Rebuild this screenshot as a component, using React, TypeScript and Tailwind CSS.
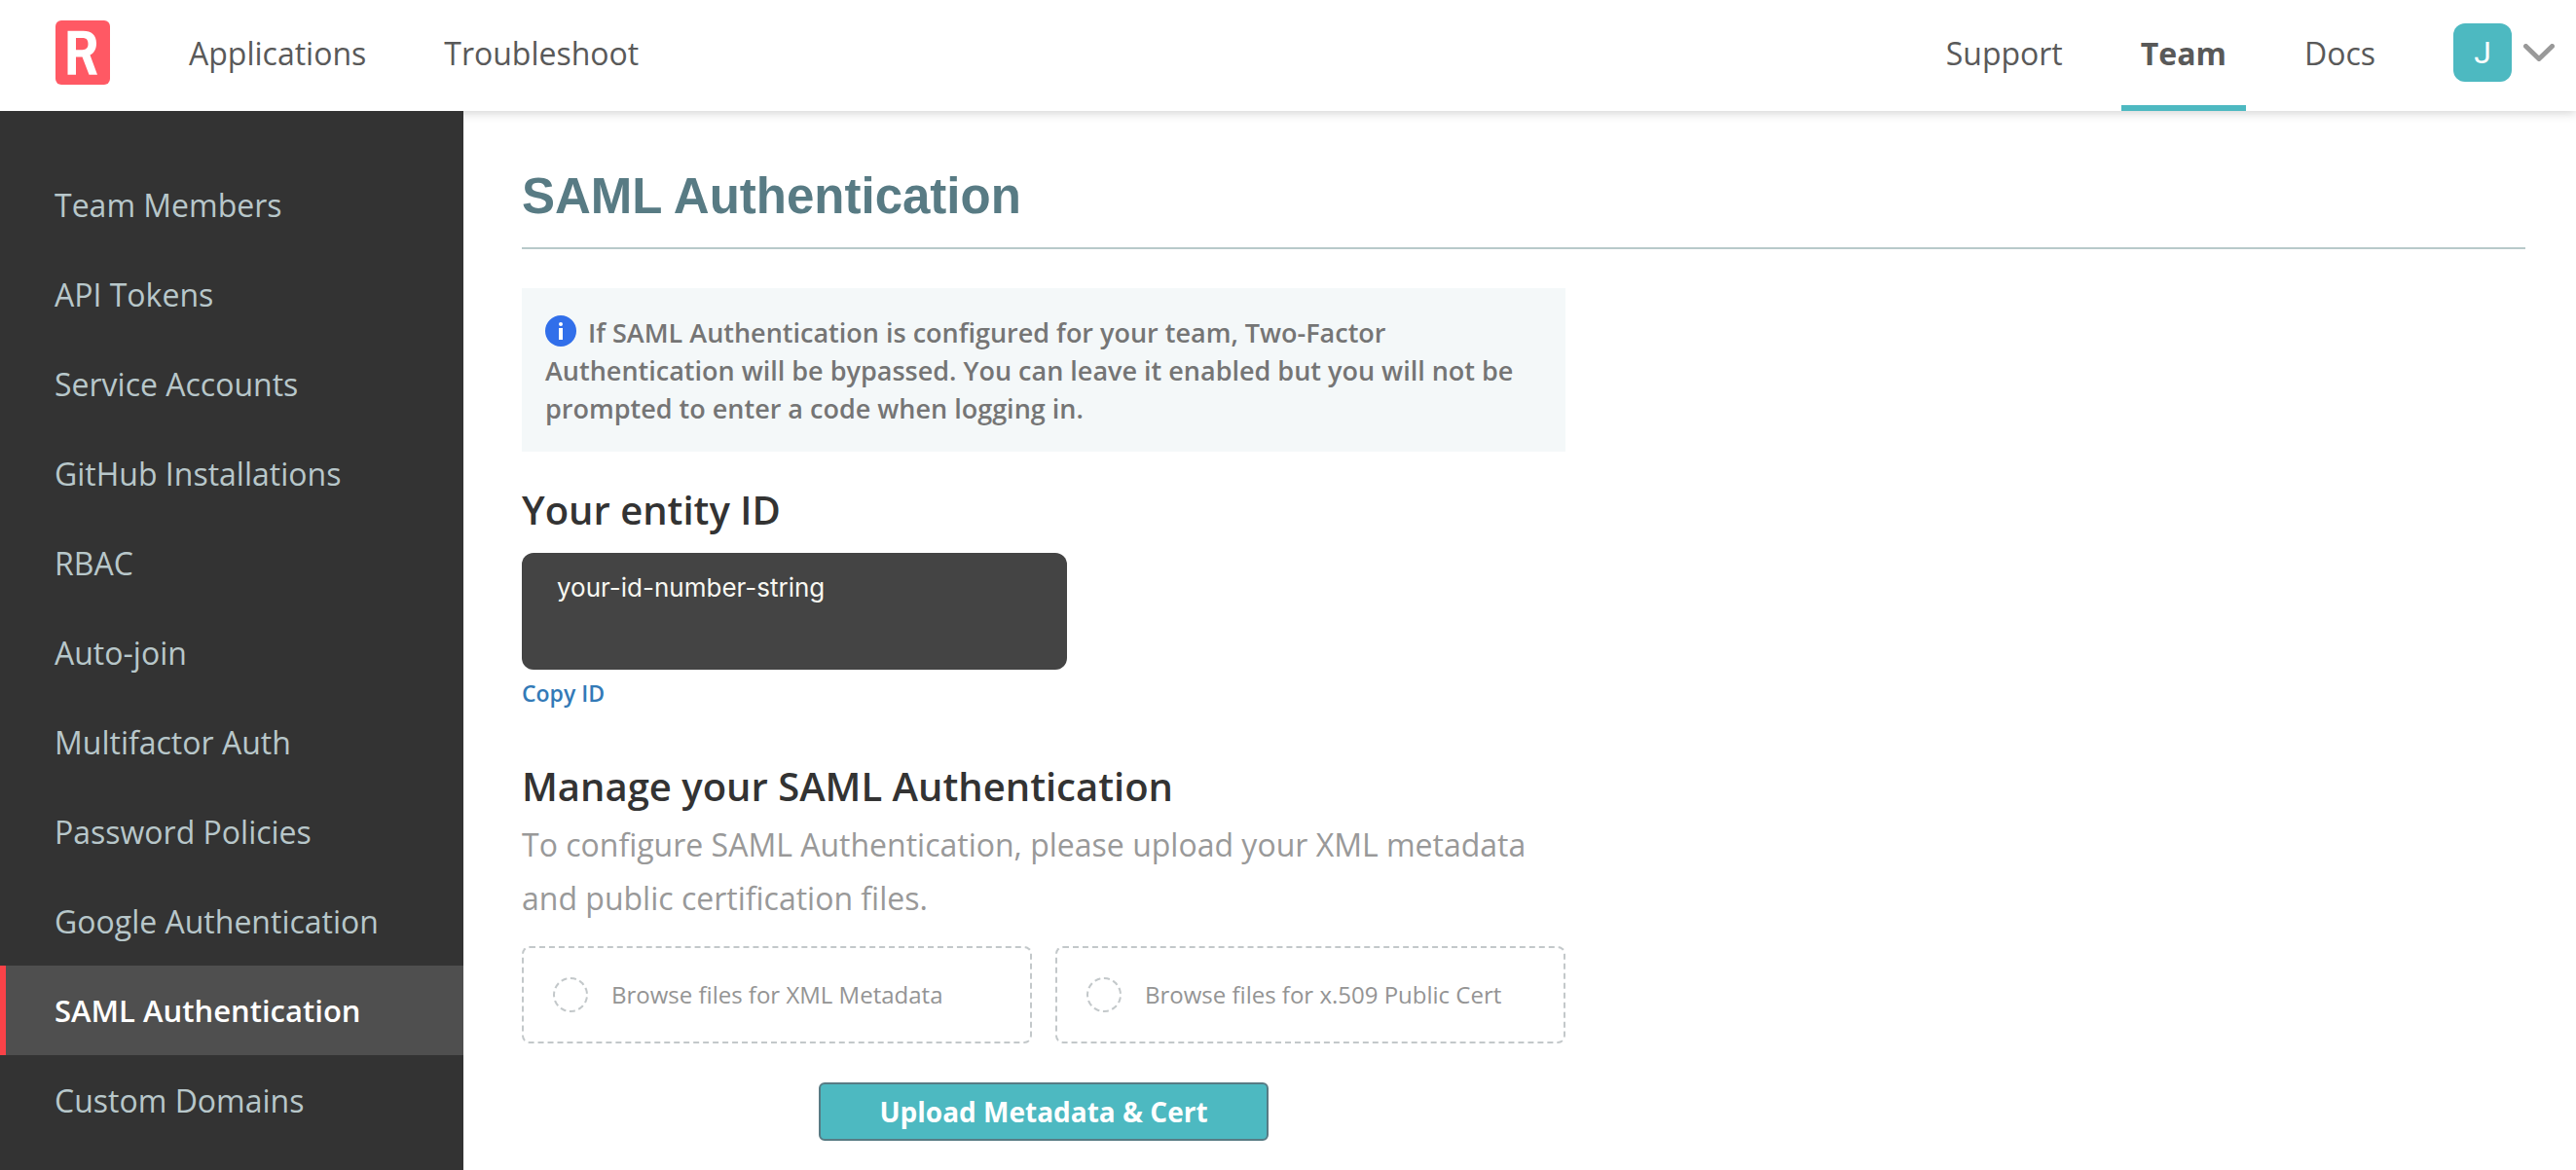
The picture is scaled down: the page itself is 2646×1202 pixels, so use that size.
import React from 'react';

const sideLinks = [
  'Team Members',
  'API Tokens',
  'Service Accounts',
  'GitHub Installations',
  'RBAC',
  'Auto-join',
  'Multifactor Auth',
  'Password Policies',
  'Google Authentication',
  'SAML Authentication',
  'Custom Domains',
];

const activeLink = 'SAML Authentication';

function Logo() {
  return (
    <svg viewBox="0 0 56 66" className="h-[66px] w-14" aria-label="Home" role="img">
      <rect width="56" height="66" rx="6" fill="#ff5964" />
      <path
        fillRule="evenodd"
        fill="#fff"
        d="M12.5 10.7h16c8.5 0 13.5 4.5 13.5 12.8 0 6-2.5 10-6.5 12l7.5 20.3h-8.500l-7-18.300h-6.500v18.300h-8.500zM21 18v12.300h6.500c4 0 6-2.200 6-6.200s-1.500-6.100-6-6.100z"
      />
    </svg>
  );
}

function InfoIcon() {
  return (
    <svg viewBox="0 0 32 32" className="mr-3 inline-block size-8 align-[-4px]" aria-hidden="true">
      <circle cx="16" cy="16" r="16" fill="#316fea" />
      <circle cx="16" cy="9" r="2" fill="#fff" />
      <rect x="14" y="13" width="4" height="12" fill="#fff" />
    </svg>
  );
}

function FilePicker({ id, label }: { id: string; label: string }) {
  return (
    <label
      htmlFor={id}
      className="flex h-[100px] flex-1 cursor-pointer items-center gap-6 rounded-lg border-2 border-dashed border-[#c3c8ca] px-[30px] text-2xl text-[#949494]"
    >
      <input id={id} type="file" className="sr-only" />
      <span className="size-9 rounded-full border-2 border-dashed border-[#c3c8ca]" />
      {label}
    </label>
  );
}

export default function App() {
  return (
    <div className="flex min-h-screen flex-col bg-white font-['Open_Sans',sans-serif] text-[#333]">
      <header className="relative flex h-[114px] items-center bg-white pr-[22px] pl-[57px] text-[32px] text-[#595959] shadow-[0_2px_10px_rgba(0,0,0,0.18)]">
        <a href="#" className="mr-[81px] pb-1.5">
          <Logo />
        </a>
        <nav className="flex gap-20 pb-1">
          <a href="#">Applications</a>
          <a href="#">Troubleshoot</a>
        </nav>
        <nav className="ml-auto flex h-full gap-10">
          <a href="#" className="flex items-center border-b-6 border-transparent px-5 pt-0.5">
            Support
          </a>
          <a
            href="#"
            className="flex items-center border-b-6 border-[#4db9c1] px-5 pt-0.5 font-bold"
          >
            Team
          </a>
          <a href="#" className="flex items-center border-b-6 border-transparent px-5 pt-0.5">
            Docs
          </a>
        </nav>
        <button
          type="button"
          aria-label="Account menu"
          className="ml-[60px] flex items-center gap-3 pb-1.5"
        >
          <span className="flex size-[60px] items-center justify-center rounded-xl bg-[#4db9c1] font-['Roboto',sans-serif] text-[32px] text-white">
            J
          </span>
          <svg viewBox="0 0 32 18" className="h-[18px] w-8" aria-hidden="true">
            <path
              d="M2.5 2.5L16 15.5l13.5-13"
              fill="none"
              stroke="#999"
              strokeWidth="5"
              strokeLinecap="round"
              strokeLinejoin="round"
            />
          </svg>
        </button>
      </header>

      <div className="flex flex-1">
        <nav className="relative w-[476px] shrink-0 bg-[#333] pt-[50px] text-[32px] text-[#b8c7ca]">
          {sideLinks.map((label) => (
            <a
              key={label}
              href="#"
              aria-current={label === activeLink ? 'page' : undefined}
              className={
                label === activeLink
                  ? 'flex h-[92px] items-center border-l-6 border-[#fa4248] bg-[#4f4f4f] pl-[50px] text-[31px] font-semibold text-white'
                  : 'flex h-[92px] items-center border-l-6 border-transparent pt-0.5 pl-[50px]'
              }
            >
              {label}
            </a>
          ))}
        </nav>

        <main className="min-w-0 flex-1 pr-[52px] pl-[60px]">
          <h1 className="border-b-2 border-[#b8c9ca] pt-14 pb-5 font-['Liberation_Sans',sans-serif] text-[51px] leading-[64px] font-bold text-[#587b84]">
            SAML Authentication
          </h1>

          <div className="max-w-[1072px]">
            <p className="mt-10 bg-[#f4f8f9] px-6 pt-[26px] pb-[25px] text-[27px] leading-[39px] font-semibold text-[#757575]">
              <InfoIcon />
              If SAML Authentication is configured for your team, Two-Factor Authentication will be
              bypassed. You can leave it enabled but you will not be prompted to enter a code when
              logging in.
            </p>

            <h2 className="mt-8 text-[40px] leading-[56px] font-semibold">Your entity ID</h2>
            <pre className="mt-4 h-[120px] max-w-[560px] rounded-xl bg-[#444] px-9 py-5 font-['Inter',sans-serif] text-[26px] leading-8 text-[#f8f8f2]">
              your-id-number-string
            </pre>
            <button
              type="button"
              className="mt-2 block text-[23px] leading-8 font-semibold text-[#337ab7]"
            >
              Copy ID
            </button>

            <h2 className="mt-[52px] text-[40px] leading-[56px] font-semibold">
              Manage your SAML Authentication
            </h2>
            <p className="mt-1 text-[32px] leading-[55px] text-[#999]">
              To configure SAML Authentication, please upload your XML metadata and public
              certification files.
            </p>

            <form>
              <div className="mt-[22px] flex gap-6">
                <FilePicker id="xml-metadata" label="Browse files for XML Metadata" />
                <FilePicker id="public-cert" label="Browse files for x.509 Public Cert" />
              </div>
              <button
                type="button"
                className="mx-auto mt-10 block h-[60px] w-[462px] rounded-md border-2 border-[#587b84] bg-[#4db9c1] text-[28px] leading-none font-bold text-white"
              >
                Upload Metadata &amp; Cert
              </button>
            </form>
          </div>
        </main>
      </div>
    </div>
  );
}
